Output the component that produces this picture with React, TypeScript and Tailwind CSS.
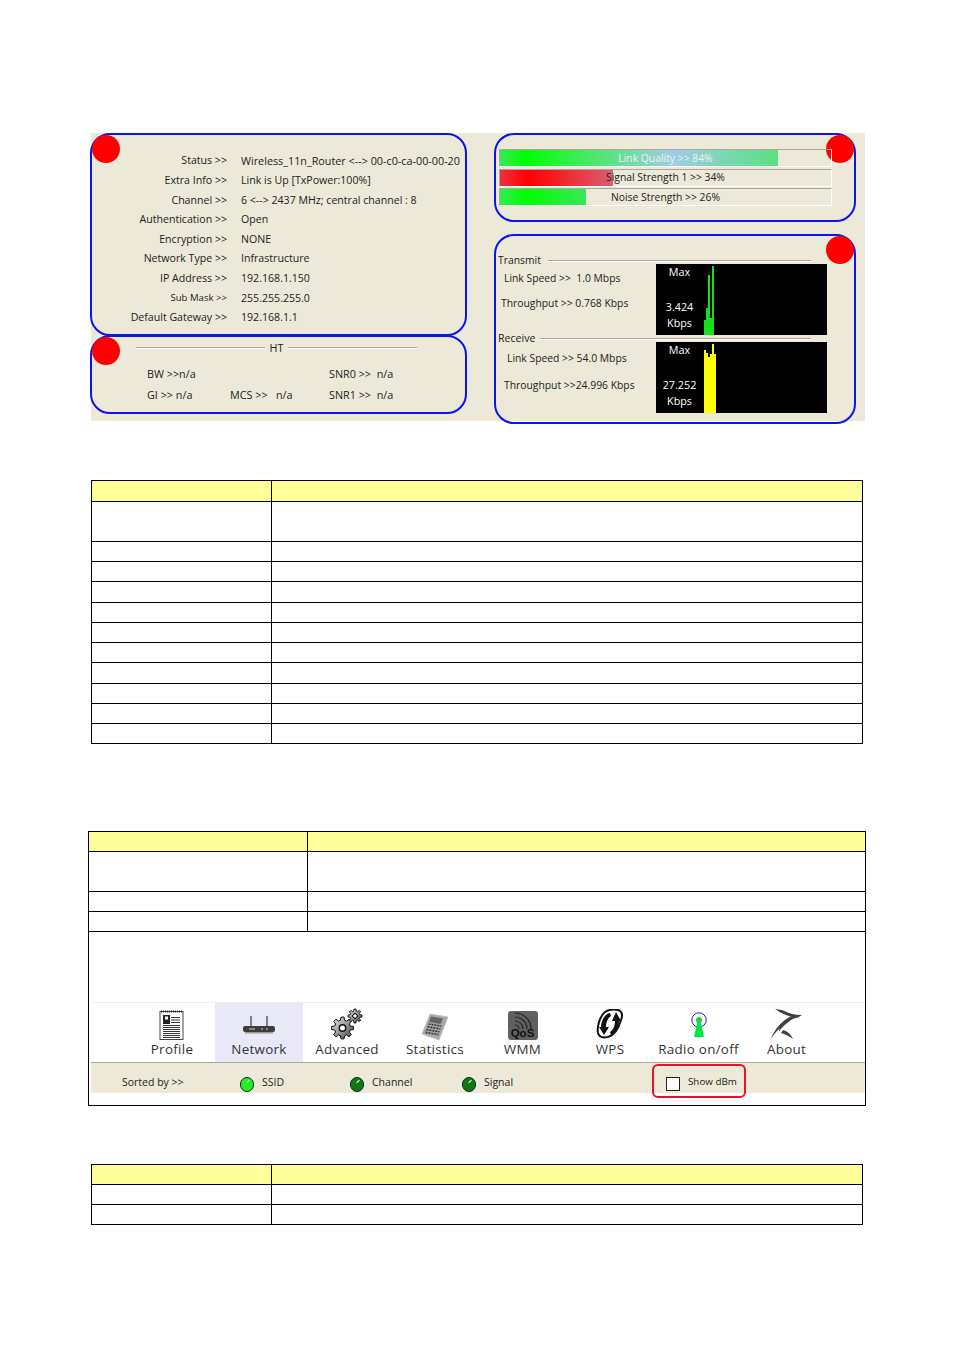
const statusRows = [
  ['Status >>', 'Wireless_11n_Router <--> 00-c0-ca-00-00-20'],
  ['Extra Info >>', 'Link is Up [TxPower:100%]'],
  ['Channel >>', '6 <--> 2437 MHz; central channel : 8'],
  ['Authentication >>', 'Open'],
  ['Encryption >>', 'NONE'],
  ['Network Type >>', 'Infrastructure'],
  ['IP Address >>', '192.168.1.150'],
  ['Sub Mask >>', '255.255.255.0'],
  ['Default Gateway >>', '192.168.1.1'],
]

const table1Rows = [40, 20, 20, 21, 20, 20, 20, 21, 20, 20, 20]
const table2Rows = [40, 20, 20]

const RedDot = ({ className }: { className: string }) => (
  <div className={`absolute w-[28px] h-[28px] rounded-full bg-[#ff0000] ${className}`} />
)

const Bar = ({ label, pct, fill, white, nudge }: { label: string; pct: number; fill: string; white?: boolean; nudge?: boolean }) => (
  <div className="relative h-[18px] w-[333px] border-t border-l border-t-[#aca899] border-l-[#aca899] border-r border-b border-r-white border-b-white">
    <div className={`h-full ${fill}`} style={{ width: `${pct}%` }} />
    <div className={`absolute inset-0 flex items-center justify-center text-[10.35px] ${nudge ? 'pt-[2px]' : ''} ${white ? 'text-[#f0f4f0]' : 'text-[#222]'}`}>{label}</div>
  </div>
)

const Table = ({ left, col, width, rows, headH = 20, children }: { left: string; col: string; width: string; rows: number[]; headH?: number; children?: React.ReactNode }) => (
  <table className={`${left} ${width} table-fixed border-collapse`}>
    <tbody>
      <tr style={{ height: headH }}>
        <td className={`${col} border border-black bg-[#ffff99] p-0`} />
        <td className="border border-black bg-[#ffff99] p-0" />
      </tr>
      {rows.map((h, i) => (
        <tr key={i} style={{ height: h }}>
          <td className="border border-black p-0" />
          <td className="border border-black p-0" />
        </tr>
      ))}
      {children}
    </tbody>
  </table>
)

const Rule = () => <div className="h-[2px] flex-1 border-t border-t-[#aca899] border-b border-b-white" />

const ProfileIcon = () => (
  <svg width="25" height="30" viewBox="0 0 25 30" className="-ml-[2px]">
    <rect x="1" y="1.5" width="23" height="28" fill="#fff" stroke="#444" />
    <path d="M2 1.5h21" stroke="#222" strokeWidth="2" strokeDasharray="1 1" />
    <rect x="4" y="5" width="7" height="9" fill="#222" />
    <rect x="6" y="6.5" width="3" height="3" fill="#fff" />
    <path d="M12 7.5h9M12 10h9M12 12.5h9M4 15.5h17M4 17.5h17M4 19.5h17M4 21.5h17M4 23.5h17M4 25.5h17M4 27.5h17" stroke="#333" />
  </svg>
)

const RouterIcon = () => (
  <svg width="32" height="20" viewBox="0 0 32 20" className="mb-[5px]">
    <path d="M8 1v11M24 1v11" stroke="#666" strokeWidth="1.6" />
    <rect x="0" y="11" width="32" height="6" rx="2" fill="#3d3d3d" />
    <path d="M2 17h28v1.5H2z" fill="#999" />
    <path d="M6 14h6M18 14h2M23 14h2" stroke="#ccc" />
  </svg>
)

// toothed wheel around 0,0
const gearPath = (outer: number, inner: number, teeth: number) => {
  const pts: string[] = []
  for (let i = 0; i < teeth; i++) {
    const a = (i / teeth) * Math.PI * 2
    const w = Math.PI / teeth / 2
    const at = (r: number, t: number) => `${(Math.cos(t) * r).toFixed(2)} ${(Math.sin(t) * r).toFixed(2)}`
    pts.push(at(inner, a - w * 1.3), at(outer, a - w * 0.7), at(outer, a + w * 0.7), at(inner, a + w * 1.3))
  }
  return `M${pts.join('L')}z`
}

const AdvancedIcon = () => (
  <svg width="32" height="32" viewBox="0 0 32 32">
    <defs>
      <linearGradient id="g1" x1="0" y1="0" x2="1" y2="1">
        <stop offset="0" stopColor="#eee" />
        <stop offset="1" stopColor="#444" />
      </linearGradient>
    </defs>
    <g transform="translate(11.5 20)">
      <path d={gearPath(11, 8, 8)} fill="url(#g1)" stroke="#111" strokeWidth="1" />
      <circle r="3.2" fill="#fff" stroke="#111" strokeWidth="1.4" />
    </g>
    <g transform="translate(24 8)">
      <path d={gearPath(7, 5, 8)} fill="url(#g1)" stroke="#111" strokeWidth="1" />
      <rect x="-2" y="-2" width="4" height="4" fill="#fff" stroke="#111" transform="rotate(45)" />
    </g>
  </svg>
)

const StatsIcon = () => (
  <svg width="28" height="28" viewBox="0 0 28 28" className="-mb-[1px]">
    <path d="M9 1l18 3-9 23L1 21z" fill="#a8a8a8" stroke="#c4c4c4" />
    <path d="M10 3.5l12 2-2.5 5.5-11.5-2z" fill="#666" />
    <path d="M7.5 11l13 2.2M6.5 13.8l13 2.2M5.5 16.6l13 2.2M4.5 19.4l13 2.2" stroke="#333" strokeWidth="1.6" strokeDasharray="2 1" />
  </svg>
)

const QosIcon = () => (
  <div className="relative w-[30px] h-[29px] rounded-[3px] bg-[#606060]">
    <svg width="30" height="29" viewBox="0 0 30 29" className="absolute inset-0">
      <path d="M7 14a4 4 0 0 1 4 4M7 10a8 8 0 0 1 8 8M7 6a12 12 0 0 1 12 12M7 2a16 16 0 0 1 16 16" fill="none" stroke="#222" strokeWidth="1.2" />
    </svg>
    <span className="absolute left-0 right-0 bottom-[1px] text-center text-[11.5px] leading-[11px] font-bold text-[#111] font-['Liberation_Sans',sans-serif]">QoS</span>
  </div>
)

const WpsIcon = () => (
  <svg width="28" height="30" viewBox="0 0 28 30" className="mb-[1px]">
    <path d="M9 3c5-3 9-3 13-2 4 1 5 5 3 10-2 7-5 15-13 17-5 1-9 0-10-4C1 19 3 8 9 3z" fill="#fff" stroke="#111" strokeWidth="2" />
    <path d="M14 4C8 5 5 13 5 18H3l5 8 5-8h-3c0-5 2-9 5-11z" fill="#111" />
    <path d="M15 26c5-2 8-9 8-14h2l-5-9-4 9h3c0 5-2 9-5 11z" fill="#111" />
  </svg>
)

const RadioIcon = () => (
  <svg width="16" height="26" viewBox="0 0 16 26" className="mb-[2px]">
    <circle cx="8" cy="8" r="7.2" fill="#fff" stroke="#2222aa" />
    <circle cx="8" cy="8" r="3" fill="#22cc44" />
    <path d="M6.5 9h3L13 25H3z" fill="#00e640" />
  </svg>
)

const AboutIcon = () => (
  <svg width="32" height="32" viewBox="0 0 32 32" className="-ml-[2px]">
    <g fill="#404040">
      <path d="M5 1l7 1c6 3 12 5 20 5l-5 3C20 9 12 6 5 1z" />
      <path d="M28 9C18 12 7 21 1 31c3-9 11-19 21-23z" />
      <path d="M20 13c-5 3-9 7-11 11 0-5 4-10 8-12z" />
      <path d="M13 22c4 1 8 4 10 9-4-3-8-5-12-6z" />
    </g>
  </svg>
)

const Tab = ({ label, icon, active, width }: { label: string; icon: React.ReactNode; active?: boolean; width: string }) => (
  <div className={`${width} h-[60px] flex flex-col items-center ${active ? 'bg-[#e8e8f6]' : ''}`}>
    <div className="h-[37px] flex items-end justify-center">{icon}</div>
    <div className="text-[13.4px] leading-[18px] text-[#333] whitespace-nowrap tracking-[0.3px]">{label}</div>
  </div>
)

const Led = ({ on }: { on?: boolean }) => (
  <span className={`relative block w-[14px] h-[15px] rounded-full border border-[#222] ${on ? 'bg-[#22ee22]' : 'bg-[#117711]'}`}>
    <span className="absolute left-[5px] top-[3px] w-[4px] h-[1px] -rotate-45 bg-white" />
  </span>
)

const SortItem = ({ label, on, width }: { label: string; on?: boolean; width: string }) => (
  <div className={`${width} flex items-center gap-[8px]`}>
    <Led on={on} />
    <span className="text-[10.5px] -mt-[2px] text-[#222]">{label}</span>
  </div>
)

export default function App() {
  return (
    <div className="w-[954px] h-[1350px] bg-white pt-[133px] text-[10.6px] text-[#222] font-['Open_Sans',sans-serif]">
      {/* Status screenshot */}
      <div className="relative ml-[91px] w-[774px] h-[288px] bg-[#ece9d8]">
        <div className="flex gap-[27px] -ml-px">
          <div className="w-[377px]">
            <div className="relative h-[203px] border-[2.5px] border-[#0a14f0] rounded-[20px] pt-[16.6px]">
              <RedDot className="left-[-0.5px] top-[-0.5px]" />
              {statusRows.map(([k, v], i) => (
                <div key={k} className="flex h-[19.6px] items-center whitespace-pre">
                  <div className={`w-[135px] text-right ${k === 'Sub Mask >>' ? 'text-[9.6px]' : ''}`}>{k}</div>
                  <div className={`ml-[14px] ${i === 0 ? 'text-[10.8px]' : ''}`}>{v}</div>
                </div>
              ))}
            </div>
            <div className="relative h-[79px] border-[2.5px] border-[#0a14f0] rounded-[20px] -mt-px text-[10.8px]">
              <RedDot className="left-[-0.5px] top-0" />
              <div className="flex items-center mt-[1px] ml-[44px] w-[281px] h-[20px]">
                <Rule />
                <span className="mx-[5px]">HT</span>
                <Rule />
              </div>
              <div className="grid grid-cols-[83px_99px_auto] mt-[8px] ml-[55px] gap-y-[5px] whitespace-pre">
                <div>BW &gt;&gt;n/a</div>
                <div />
                <div>SNR0 &gt;&gt;  n/a</div>
                <div>GI &gt;&gt; n/a</div>
                <div>MCS &gt;&gt;   n/a</div>
                <div>SNR1 &gt;&gt;  n/a</div>
              </div>
            </div>
          </div>
          <div className="w-[362px]">
            <div className="relative h-[89px] border-[2.5px] border-[#0a14f0] rounded-[20px] pt-[14px] pl-[3px] flex flex-col gap-[1.5px]">
              <RedDot className="right-[0.5px] top-[-0.5px]" />
              <Bar label="Link Quality >> 84%" pct={84} fill="bg-[linear-gradient(90deg,#38e858,#00ff00_9%,#a0cce8_62%,#58e080)]" white nudge />
              <Bar label="Signal Strength 1 >> 34%" pct={34} fill="bg-[linear-gradient(90deg,#ee3040,#ff0000_25%,#d86070)]" />
              <Bar label="Noise Strength >> 26%" pct={26} fill="bg-[linear-gradient(90deg,#30ee50,#00ff00_30%,#38e858)]" nudge />
            </div>
            <div className="relative h-[190px] mt-[12px] border-[2.5px] border-[#0a14f0] rounded-[20px] text-[10.35px]">
              <RedDot className="right-[0.5px] top-0" />
              <div className="absolute left-[2px] top-[17px] w-[313px] flex items-center">
                <span>Transmit</span>
                <div className="ml-[7px] flex-1 flex"><Rule /></div>
              </div>
              <div className="absolute left-[2px] top-[95px] w-[313px] flex items-center">
                <span className="text-[10.6px]">Receive</span>
                <div className="ml-[5px] flex-1 flex"><Rule /></div>
              </div>
              <div className="absolute left-[8px] top-[35px] whitespace-pre">Link Speed &gt;&gt;  1.0 Mbps</div>
              <div className="absolute left-[5px] top-[60px] whitespace-pre">Throughput &gt;&gt; 0.768 Kbps</div>
              <div className="absolute left-[11px] top-[115px] whitespace-pre">Link Speed &gt;&gt; 54.0 Mbps</div>
              <div className="absolute left-[8px] top-[142px] whitespace-pre">Throughput &gt;&gt;24.996 Kbps</div>
              <div className="absolute left-[160px] top-[28px] w-[171px] h-[71px] bg-black text-white text-[10.8px]">
                <div className="absolute left-0 w-[47px] text-center top-0">Max</div>
                <div className="absolute left-0 w-[47px] text-center top-[35px]">3.424</div>
                <div className="absolute left-0 w-[47px] text-center top-[51px]">Kbps</div>
                <svg width="20" height="71" viewBox="0 0 20 71" className="absolute left-[48px] top-0">
                  <path d="M0 71V56h2V44h2V11h2v43h2V2h2v69z" fill="#16e01c" />
                </svg>
              </div>
              <div className="absolute left-[160px] top-[106px] w-[171px] h-[71px] bg-black text-white text-[10.8px]">
                <div className="absolute left-0 w-[47px] text-center top-0">Max</div>
                <div className="absolute left-0 w-[47px] text-center top-[35px]">27.252</div>
                <div className="absolute left-0 w-[47px] text-center top-[51px]">Kbps</div>
                <svg width="20" height="71" viewBox="0 0 20 71" className="absolute left-[48px] top-0">
                  <path d="M0 71V8h2v3h2v4h2v-3h2V2h2v10h2v59z" fill="#ffff00" />
                </svg>
              </div>
            </div>
          </div>
        </div>
      </div>

      {/* Table 1 */}
      <div className="mt-[59px]">
        <Table left="ml-[91px]" width="w-[772px]" col="w-[180px]" rows={table1Rows} headH={21} />
      </div>

      {/* Table 2 with the embedded screenshot */}
      <div className="mt-[87px]">
        <Table left="ml-[88px]" width="w-[778px]" col="w-[219px]" rows={table2Rows}>
          <tr>
            <td colSpan={2} className="border border-black p-0 h-[174px] align-top">
              <div className="mt-[70px] border-t border-t-[#e4f2f4] ml-[2px] h-[60px] flex pl-[38px]">
                <Tab label="Profile" width="w-[86px]" icon={<ProfileIcon />} />
                <Tab label="Network" width="w-[88px]" active icon={<RouterIcon />} />
                <Tab label="Advanced" width="w-[88px]" icon={<AdvancedIcon />} />
                <Tab label="Statistics" width="w-[88px]" icon={<StatsIcon />} />
                <Tab label="WMM" width="w-[87px]" icon={<QosIcon />} />
                <Tab label="WPS" width="w-[88px]" icon={<WpsIcon />} />
                <Tab label="Radio on/off" width="w-[89px]" icon={<RadioIcon />} />
                <Tab label="About" width="w-[87px]" icon={<AboutIcon />} />
              </div>
              <div className="relative ml-[2px] h-[31px] box-border pt-[12px] border-t border-t-[#aca899] bg-[#ece9d8] flex items-center pl-[31px]">
                <span className="w-[118px] text-[10.5px] -mt-[2px]">Sorted by &gt;&gt;</span>
                <SortItem label="SSID" on width="w-[110px]" />
                <SortItem label="Channel" width="w-[112px]" />
                <SortItem label="Signal" width="w-[190px]" />
                <div className="absolute left-[561px] top-[1px] w-[94px] h-[34px] border-2 border-[#ee1122] rounded-[6px] flex items-center pl-[12px] gap-[8px]">
                  <span className="block w-[14px] h-[14px] border border-[#222] bg-white translate-y-[3px]" />
                  <span className="text-[9.8px] translate-y-[1px]">Show dBm</span>
                </div>
              </div>
            </td>
          </tr>
        </Table>
      </div>

      {/* Table 3 */}
      <div className="mt-[58px]">
        <Table left="ml-[91px]" width="w-[772px]" col="w-[180px]" rows={[20, 20]} />
      </div>
    </div>
  )
}
